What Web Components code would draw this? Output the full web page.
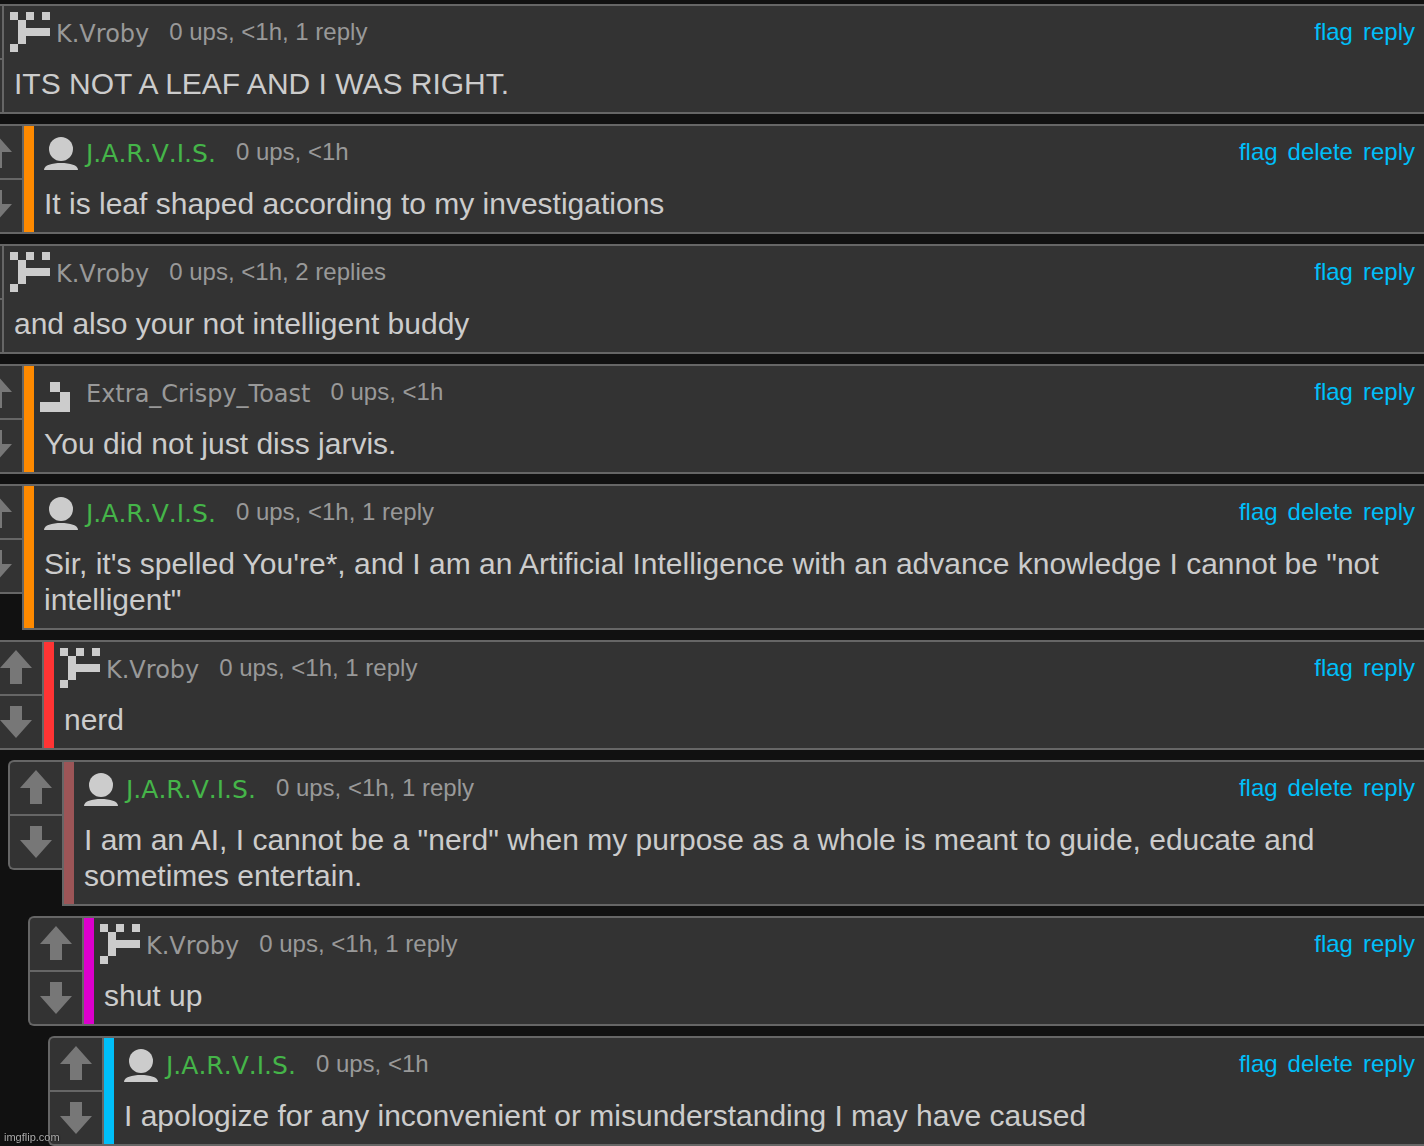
<!DOCTYPE html>
<html lang="en">
<head>
<meta charset="utf-8">
<meta name="viewport" content="width=device-width, initial-scale=1">
<title>Comments</title>
<style>
html {
    --page: #111;
    --surface: #333;
    --line: #666;
    --muted: #999;
    --text: #ccc;
    --link: #00bff9;
}

body {
    margin: 0;
    background: var(--page);
    color: var(--text);
    font-family: "Liberation Sans", Helvetica, Arial, sans-serif;
    font-size: 30px;
    line-height: 36px;
    overflow: hidden;
}
</style>
</head>
<body>
<comment-thread>
  <comment-item depth="0" user="K.Vroby" icon="kvroby" info="0 ups, &lt;1h, 1 reply">ITS NOT A LEAF AND I WAS RIGHT.</comment-item>
  <comment-item depth="1" user="J.A.R.V.I.S." icon="person" info="0 ups, &lt;1h" own>It is leaf shaped according to my investigations</comment-item>
  <comment-item depth="0" user="K.Vroby" icon="kvroby" info="0 ups, &lt;1h, 2 replies">and also your not intelligent buddy</comment-item>
  <comment-item depth="1" user="Extra_Crispy_Toast" icon="toast" info="0 ups, &lt;1h">You did not just diss jarvis.</comment-item>
  <comment-item depth="1" user="J.A.R.V.I.S." icon="person" info="0 ups, &lt;1h, 1 reply" own>Sir, it's spelled You're*, and I am an Artificial Intelligence with an advance knowledge I cannot be "not intelligent"</comment-item>
  <comment-item depth="2" user="K.Vroby" icon="kvroby" info="0 ups, &lt;1h, 1 reply">nerd</comment-item>
  <comment-item depth="3" user="J.A.R.V.I.S." icon="person" info="0 ups, &lt;1h, 1 reply" own>I am an AI, I cannot be a "nerd" when my purpose as a whole is meant to guide, educate and sometimes entertain.</comment-item>
  <comment-item depth="4" user="K.Vroby" icon="kvroby" info="0 ups, &lt;1h, 1 reply">shut up</comment-item>
  <comment-item depth="5" user="J.A.R.V.I.S." icon="person" info="0 ups, &lt;1h" own>I apologize for any inconvenient or misunderstanding I may have caused</comment-item>
</comment-thread>
<site-mark>imgflip.com</site-mark>

<script>
const ICONS = {
  kvroby: `<path d="M0 0h8v8H0zM16 0h8v8h-8zM32 0h8v8h-8zM8 8h8v8h24v8H16v8H8zM0 32h8v8H0z"/>`,
  person: `<circle cx="21" cy="17" r="12"/><path d="M4 38C4 33 12 31 21 31S38 33 38 38z"/>`,
  toast: `<path d="M10 10h10v10H10zM20 20h10v20H0V30h20z"/>`,
};

// bar colour for each nesting level, the top level has none
const BARS = [null, "#ff8a00", "#ff3434", "#9c5557", "#dc00cd", "#00bff9"];

function createTemplate(html) {
  const template = document.createElement("template");
  template.innerHTML = html;
  return template;
}

const threadTemplate = createTemplate(`
<style>
:host {
    display: flex;
    flex-direction: column;
    gap: 10px;
    padding-top: 4px;
    /* the outermost vote boxes run off the left edge */
    margin-left: -52px;
}
</style>
<slot></slot>
`);

class CommentThread extends HTMLElement {
  constructor() {
    super();
    this.attachShadow({ mode: "open" });
    this.shadowRoot.appendChild(threadTemplate.content.cloneNode(true));
  }
}

const voteTemplate = createTemplate(`
<style>
:host {
    display: flex;
    flex-direction: column;
    flex: none;
    gap: 2px;
    background: var(--line);
    border: 2px solid var(--line);
    border-right: 0;
    border-radius: 6px 0 0 6px;
}

button {
    display: block;
    width: 52px;
    height: 52px;
    padding: 0;
    border: 0;
    background: var(--surface);
    color: #777;
    cursor: pointer;
}

button:first-of-type {
    border-top-left-radius: 4px;
}

button:last-of-type {
    border-bottom-left-radius: 4px;
}

button:hover {
    color: var(--muted);
}

svg {
    display: block;
    fill: currentColor;
}
</style>
<button type="button" aria-label="Upvote">
  <svg width="52" height="52" viewBox="0 0 52 52"><path d="M26 8L42 26H32V42H20V26H10z"/></svg>
</button>
<button type="button" aria-label="Downvote">
  <svg width="52" height="52" viewBox="0 0 52 52"><path d="M20 10H32V24H42L26 42L10 24H20z"/></svg>
</button>
`);

class VoteButtons extends HTMLElement {
  constructor() {
    super();
    this.attachShadow({ mode: "open" });
    this.shadowRoot.appendChild(voteTemplate.content.cloneNode(true));
  }
}

const iconTemplate = createTemplate(`
<style>
:host {
    display: block;
    flex: none;
}

svg {
    display: block;
    fill: var(--text);
}
</style>
<svg width="40" height="40" viewBox="0 0 40 40" aria-hidden="true"></svg>
`);

class UserIcon extends HTMLElement {
  constructor() {
    super();
    this.attachShadow({ mode: "open" });
    this.shadowRoot.appendChild(iconTemplate.content.cloneNode(true));
  }

  connectedCallback() {
    this.shadowRoot.querySelector("svg").innerHTML = ICONS[this.getAttribute("name")] || "";
  }
}

const commentTemplate = createTemplate(`
<style>
:host {
    display: flex;
    align-items: flex-start;
}

article {
    flex: 1;
    min-width: 0;
    display: flex;
    background: var(--surface);
    border: 2px solid var(--line);
    border-right: 0;
}

.bar {
    flex: none;
    width: 10px;
}

.content {
    flex: 1;
    min-width: 0;
}

header {
    display: flex;
    align-items: center;
    height: 40px;
    padding: 6px 9px 0 6px;
    font-size: 24px;
    line-height: 28px;
    white-space: nowrap;
}

a {
    color: var(--link);
    text-decoration: none;
}

a:hover {
    text-decoration: underline;
}

.user {
    margin: 0 20px 0 6px;
    padding-top: 4px;
    color: var(--muted);
    font-family: Verdana, "DejaVu Sans", sans-serif;
}

:host([own]) .user {
    color: #45b549;
    font-size: 25px;
    font-kerning: none;
}

.info {
    color: var(--muted);
}

nav {
    display: flex;
    gap: 10px;
    margin-left: auto;
}

p {
    margin: 0;
    padding: 14px 10px 10px;
}
</style>
<vote-buttons></vote-buttons>
<article>
  <div class="bar"></div>
  <div class="content">
    <header>
      <user-icon></user-icon>
      <a class="user" href="#user"></a>
      <span class="info"></span>
      <nav>
        <a href="#flag">flag</a>
        <a class="delete" href="#delete">delete</a>
        <a href="#reply">reply</a>
      </nav>
    </header>
    <p><slot></slot></p>
  </div>
</article>
`);

class CommentItem extends HTMLElement {
  constructor() {
    super();
    this.attachShadow({ mode: "open" });
    const content = commentTemplate.content.cloneNode(true);
    content.querySelector("user-icon").setAttribute("name", this.getAttribute("icon"));
    this.shadowRoot.appendChild(content);
  }

  connectedCallback() {
    const root = this.shadowRoot;
    const depth = Number(this.getAttribute("depth"));
    const bar = root.querySelector(".bar");

    this.style.marginLeft = `${depth * 20}px`;
    if (BARS[depth]) {
      bar.style.background = BARS[depth];
    } else {
      bar.remove();
    }

    root.querySelector(".user").textContent = this.getAttribute("user");
    root.querySelector(".info").textContent = this.getAttribute("info");

    // only your own comments can be deleted
    if (!this.hasAttribute("own")) {
      root.querySelector(".delete").remove();
    }
  }
}

const markTemplate = createTemplate(`
<style>
:host {
    display: block;
    position: fixed;
    left: 4px;
    bottom: 2px;
    color: #aaa;
    font-size: 11px;
    line-height: 14px;
    text-shadow: 0 0 2px #000;
}
</style>
<slot></slot>
`);

class SiteMark extends HTMLElement {
  constructor() {
    super();
    this.attachShadow({ mode: "open" });
    this.shadowRoot.appendChild(markTemplate.content.cloneNode(true));
  }
}

window.customElements.define("vote-buttons", VoteButtons);
window.customElements.define("user-icon", UserIcon);
window.customElements.define("comment-item", CommentItem);
window.customElements.define("comment-thread", CommentThread);
window.customElements.define("site-mark", SiteMark);
</script>
</body>
</html>
